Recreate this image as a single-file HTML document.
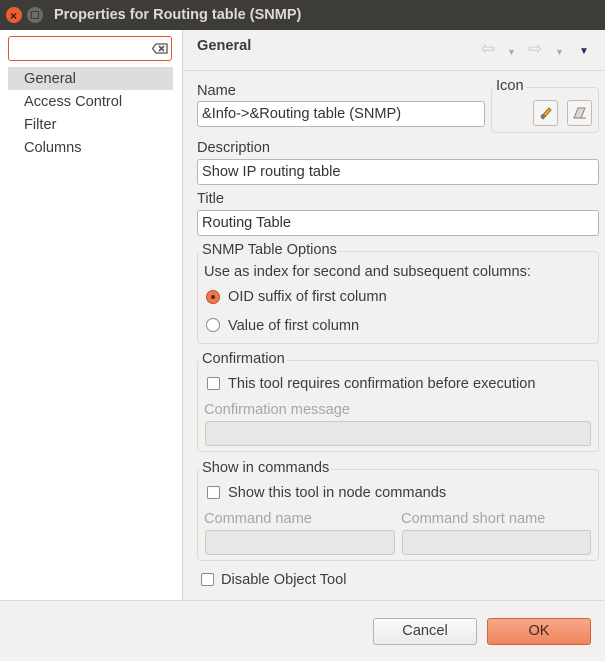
<!DOCTYPE html><html><head><style>
*{box-sizing:border-box;margin:0;padding:0}
body{width:605px;height:661px;overflow:hidden;background:#f2f1f0;font-family:"Liberation Sans",sans-serif;font-size:14.6px;color:#3c3c3c;position:relative}
.a{position:absolute;white-space:nowrap}
.t{position:absolute;white-space:nowrap;line-height:16px}
.in{position:absolute;background:#fff;border:1px solid #b8b5b2;border-radius:3px;padding:0 4px;line-height:24px;color:#333}
.dis{position:absolute;background:#e8e7e6;border:1px solid #ccc9c6;border-radius:3px}
.grp{position:absolute;border:1px solid #dcdad7;border-radius:4px}
.lg{position:absolute;background:#f2f1f0;padding:0 2px 0 3px;line-height:16px}
.cb{position:absolute;width:13px;height:13px;border:1px solid #8e8b88;border-radius:2px;background:#fff}
.rb{position:absolute;width:14px;height:14px;border:1px solid #8e8b88;border-radius:50%;background:#fff}
.gray{color:#a8a6a4}
</style></head><body>
<div class="a" style="left:0;top:0;width:605px;height:30px;background:#3d3c38"></div>
<div class="a" style="left:6px;top:7px;width:16px;height:16px;border-radius:50%;background:#e9602f"></div>
<div class="a" style="left:10px;top:9px;color:#3a1a10;font-size:12px;font-weight:bold">×</div>
<div class="a" style="left:27px;top:7px;width:16px;height:16px;border-radius:50%;background:#6b6a66"></div>
<div class="a" style="left:31px;top:11px;width:8px;height:8px;border:1px solid #3d3c38"></div>
<div class="t" style="left:54px;top:7px;color:#dfdbd2;font-weight:bold;font-size:14.5px">Properties for Routing table (SNMP)</div>

<div class="a" style="left:0;top:30px;width:183px;height:570px;background:#fff;border-right:1px solid #d6d4d1"></div>
<div class="a" style="left:8px;top:36px;width:164px;height:25px;border:1px solid #e2572a;border-radius:3px;background:#fff"></div>
<svg class="a" style="left:152px;top:43px" width="16" height="11"><path d="M4 1H15V10H4L0.5 5.5Z" fill="none" stroke="#555" stroke-width="1.3"/><path d="M7 3L12 8M12 3L7 8" stroke="#555" stroke-width="1.6"/></svg>
<div class="a" style="left:8px;top:67px;width:165px;height:23px;background:#dedddb"></div>
<div class="t" style="left:24px;top:71px">General</div>
<div class="t" style="left:24px;top:94px">Access Control</div>
<div class="t" style="left:24px;top:117px">Filter</div>
<div class="t" style="left:24px;top:140px">Columns</div>

<div class="t" style="left:197px;top:38px;font-weight:bold">General</div>
<div class="a" style="left:184px;top:70px;width:421px;height:1px;background:#dcdad7"></div>
<div class="t" style="left:481px;top:41px;font-size:17px;color:#c8c6c4">⇦</div>
<div class="t" style="left:507px;top:44px;font-size:9px;color:#aaa">▼</div>
<div class="t" style="left:528px;top:41px;font-size:17px;color:#c8c6c4">⇨</div>
<div class="t" style="left:555px;top:44px;font-size:9px;color:#aaa">▼</div>
<div class="t" style="left:579px;top:44px;font-size:10px;color:#2a2a55">▼</div>

<div class="t" style="left:197px;top:83px">Name</div>
<div class="in" style="left:197px;top:101px;width:288px;height:26px">&amp;Info-&gt;&amp;Routing table (SNMP)</div>
<div class="grp" style="left:491px;top:87px;width:108px;height:46px"></div>
<div class="lg" style="left:493px;top:78px">Icon</div>
<div class="a" style="left:533px;top:100px;width:25px;height:26px;border:1px solid #bbb;border-radius:3px;background:#f6f5f4"></div>
<svg class="a" style="left:537px;top:104px" width="17" height="17"><path d="M4 13L12 4L14 6L6 15Z" fill="#f2b431" stroke="#a06a10"/><circle cx="6" cy="12" r="2" fill="#777"/></svg>
<div class="a" style="left:567px;top:100px;width:25px;height:26px;border:1px solid #bbb;border-radius:3px;background:#f6f5f4"></div>
<svg class="a" style="left:571px;top:104px" width="17" height="17"><path d="M3 14L7 4H14L10 14Z" fill="#ddd8cf" stroke="#8a8276"/><path d="M9 14H15" stroke="#8a8276"/></svg>

<div class="t" style="left:197px;top:140px">Description</div>
<div class="in" style="left:197px;top:159px;width:402px;height:26px">Show IP routing table</div>
<div class="t" style="left:197px;top:191px">Title</div>
<div class="in" style="left:197px;top:210px;width:402px;height:26px">Routing Table</div>

<div class="grp" style="left:197px;top:251px;width:402px;height:93px"></div>
<div class="lg" style="left:199px;top:242px">SNMP Table Options</div>
<div class="t" style="left:204px;top:264px">Use as index for second and subsequent columns:</div>
<div class="rb" style="left:206px;top:290px;background:#ee7a4c;border-color:#c0552c"></div>
<div class="a" style="left:211px;top:295px;width:4px;height:4px;border-radius:50%;background:#5a2a18"></div>
<div class="t" style="left:228px;top:289px">OID suffix of first column</div>
<div class="rb" style="left:206px;top:318px"></div>
<div class="t" style="left:228px;top:318px">Value of first column</div>

<div class="grp" style="left:197px;top:360px;width:402px;height:92px"></div>
<div class="lg" style="left:199px;top:351px">Confirmation</div>
<div class="cb" style="left:207px;top:377px"></div>
<div class="t" style="left:228px;top:376px">This tool requires confirmation before execution</div>
<div class="t gray" style="left:204px;top:402px">Confirmation message</div>
<div class="dis" style="left:205px;top:421px;width:386px;height:25px"></div>

<div class="grp" style="left:197px;top:469px;width:402px;height:92px"></div>
<div class="lg" style="left:199px;top:460px">Show in commands</div>
<div class="cb" style="left:207px;top:486px"></div>
<div class="t" style="left:228px;top:485px">Show this tool in node commands</div>
<div class="t gray" style="left:204px;top:511px">Command name</div>
<div class="t gray" style="left:401px;top:511px">Command short name</div>
<div class="dis" style="left:205px;top:530px;width:190px;height:25px"></div>
<div class="dis" style="left:402px;top:530px;width:189px;height:25px"></div>

<div class="cb" style="left:201px;top:573px"></div>
<div class="t" style="left:221px;top:572px">Disable Object Tool</div>

<div class="a" style="left:0;top:600px;width:605px;height:1px;background:#dcdad7"></div>
<div class="a" style="left:373px;top:618px;width:104px;height:27px;border:1px solid #b5b2ae;border-radius:3px;background:linear-gradient(#fbfbfa,#eceae8);text-align:center;line-height:25px">Cancel</div>
<div class="a" style="left:487px;top:618px;width:104px;height:27px;border:1px solid #d0643f;border-radius:3px;background:linear-gradient(#f7a888,#ef845d);text-align:center;line-height:25px;color:#3a2a22">OK</div>
</body></html>
